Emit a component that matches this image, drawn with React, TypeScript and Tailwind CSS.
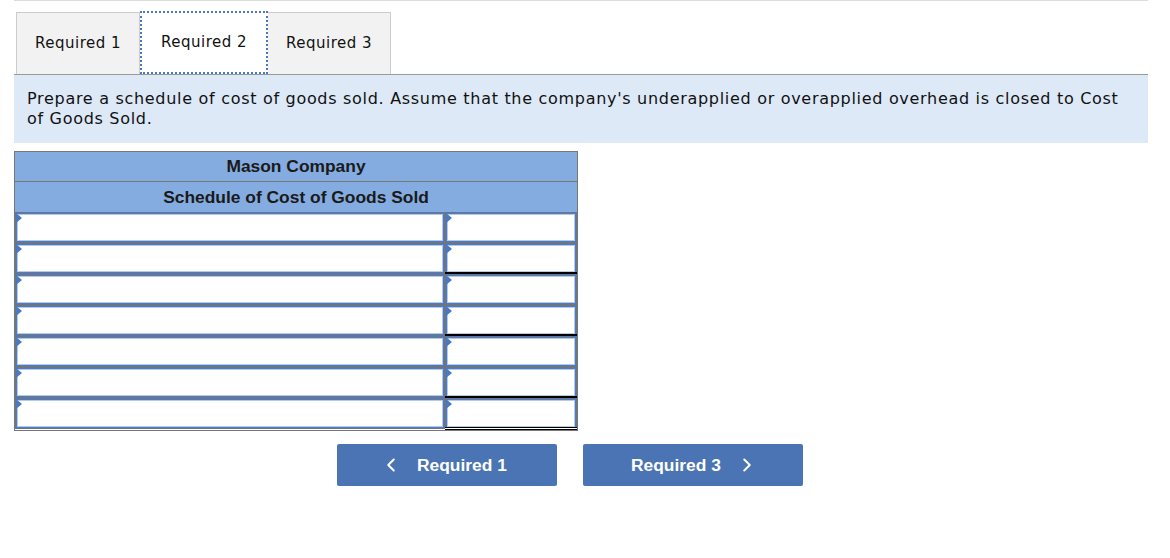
import { ChevronLeft, ChevronRight } from 'lucide-react'

const rows = [
  { under: '' },
  { under: 'single' },
  { under: '' },
  { under: 'single' },
  { under: '' },
  { under: 'single' },
  { under: 'double' },
]

function Marker() {
  return (
    <span className="absolute left-0 top-0 w-0 h-0 border-y-[5px] border-y-transparent border-l-[6px] border-l-[#4a78c2]" />
  )
}

function Cell({ className }: { className: string }) {
  return (
    <div className={`relative h-[31px] border border-[#6b7589] ${className}`}>
      <div className="h-full border border-[#4f7cc0]">
        <div className="h-full border border-[#b3cae9] bg-white" />
      </div>
      <Marker />
    </div>
  )
}

export default function App() {
  return (
    <div className="w-[1170px] h-[558px] bg-white" style={{ fontFamily: '"DejaVu Sans", Verdana, sans-serif' }}>
      <div className="ml-[14px] w-[1134px] border-t border-[#dddddd]">
        <div className="flex pl-[2px] pt-[10px] border-b border-[#9a9a9a] text-[15px] tracking-[0.5px] text-[#111]">
          <div className="w-[124px] h-[62px] mt-[1px] flex items-center justify-center bg-[#f2f2f2] border border-b-0 border-[#cccccc]">
            Required 1
          </div>
          <div className="w-[128px] h-[63px] flex items-center justify-center bg-white border-2 border-dotted border-[#4a78c2] mb-[-1px]">
            Required 2
          </div>
          <div className="w-[123px] h-[62px] mt-[1px] flex items-center justify-center bg-[#f2f2f2] border border-l-0 border-b-0 border-[#cccccc]">
            Required 3
          </div>
        </div>

        <div className="bg-[#dde9f7] pl-[13px] pr-[10px] py-[14px] text-[16px] leading-[20px] tracking-[0.7px] text-[#111]">
          Prepare a schedule of cost of goods sold. Assume that the company's underapplied or overapplied overhead is closed to Cost
          <br />
          of Goods Sold.
        </div>

        <div className="mt-[8px] w-[564px] border border-[#777777]" style={{ fontFamily: '"Liberation Sans", Arial, sans-serif' }}>
          <div className="h-[30px] bg-[#84ace0] border-b border-[#777777] flex items-center justify-center text-[17.4px] font-bold text-[#1a1a1a]">
            Mason Company
          </div>
          <div className="h-[30px] bg-[#84ace0] flex items-center justify-center text-[17.4px] font-bold text-[#1a1a1a]">
            Schedule of Cost of Goods Sold
          </div>
          {rows.map((r, i) => (
            <div key={i} className="flex">
              <Cell className="w-[430px]" />
              <div className="w-[132px]">
                <Cell className="w-full" />
                {r.under === 'single' && <div className="h-0 border-t-2 border-black -mt-[2px] relative" />}
                {r.under === 'double' && (
                  <div className="-mt-[2px] relative border-t border-b border-black h-[3px] bg-white" />
                )}
              </div>
            </div>
          ))}
        </div>

        <div className="flex gap-[26px] ml-[323px] mt-[13px]" style={{ fontFamily: '"Liberation Sans", Arial, sans-serif' }}>
          <button className="w-[220px] h-[42px] rounded-[2px] bg-[#4a74b3] text-white font-bold text-[17.4px] flex items-center pl-[43px] gap-[15px]">
            <ChevronLeft size={22} strokeWidth={2.2} />
            <span>Required 1</span>
          </button>
          <button className="w-[220px] h-[42px] rounded-[2px] bg-[#4a74b3] text-white font-bold text-[17.4px] flex items-center pl-[48px] gap-[15px]">
            <span>Required 3</span>
            <ChevronRight size={22} strokeWidth={2.2} />
          </button>
        </div>
      </div>
    </div>
  )
}
